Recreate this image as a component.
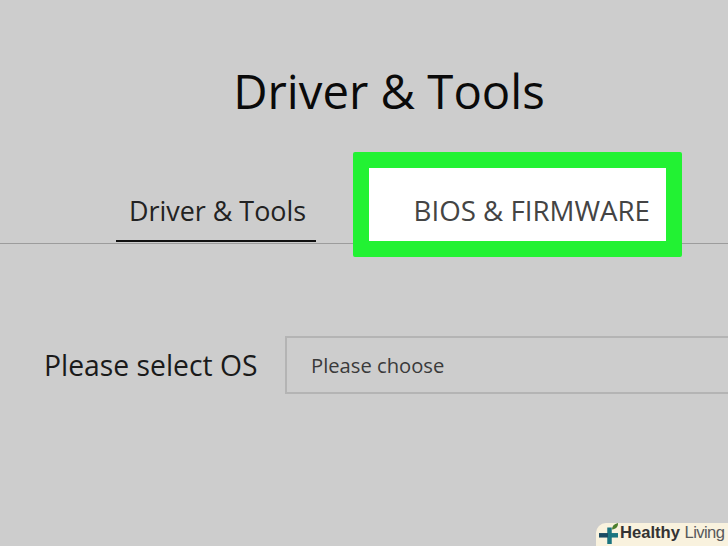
<script>
  const tabs = ['Driver & Tools', 'BIOS & FIRMWARE'];
</script>

<main class="page">
  <h1 class="title">Driver &amp; Tools</h1>

  <nav class="tabs">
    <div class="tab active">{tabs[0]}</div>
    <div class="tab highlighted"><span>{tabs[1]}</span></div>
  </nav>

  <div class="field">
    <div class="label">Please select OS</div>
    <div class="select">Please choose</div>
  </div>

  <div class="badge">
    <svg class="logo" viewBox="0 0 22 23" width="22" height="23" aria-hidden="true">
      <path d="M11.500 4.500V21" fill="none" stroke="#1b7480" stroke-width="4.500" />
      <path d="M11 12.300H20" fill="none" stroke="#1b7480" stroke-width="4.500" />
      <path d="M1 12.300H10" fill="none" stroke="#1b4a63" stroke-width="4.500" />
      <path d="M14 6.500c0-3.500 2-5.500 6-6.500.3 3.500-2 6-6 6.500z" fill="#4d7f2e" />
    </svg>
    <span class="brand"><b>Healthy</b> <span class="living">Living</span></span>
  </div>
</main>

<style>
  :global(body) {
    margin: 0;
    background: #cdcdcd;
  }

  .page {
    position: relative;
    width: 728px;
    height: 546px;
    overflow: hidden;
    background: #cdcdcd;
    font-family: "Open Sans", "Noto Sans", sans-serif;
    color: #1a1a1a;
  }

  .title {
    margin: 0;
    padding-top: 58px;
    padding-left: 50px;
    box-sizing: border-box;
    text-align: center;
    font-size: 47.3px;
    line-height: 66px;
    font-weight: 400;
    color: #0a0a0a;
    height: 152px;
  }

  .tabs {
    display: flex;
    align-items: flex-start;
    border-bottom: 1px solid #9c9c9c;
    box-sizing: border-box;
    height: 92px;
  }

  .tab {
    box-sizing: border-box;
    white-space: nowrap;
  }

  .active {
    width: 200px;
    height: 90px;
    margin-left: 116px;
    padding: 40px 0 0 13px;
    font-size: 26.9px;
    line-height: 38px;
    border-bottom: 2px solid #111;
    color: #222;
  }

  .highlighted {
    position: relative;
    width: 329px;
    height: 105px;
    margin-left: 37px;
    padding: 23px 16px 0 0;
    text-align: right;
    font-size: 27.7px;
    line-height: 38px;
    color: #444;
    background: #fff;
    border: 16px solid #22f233;
    border-radius: 2px;
  }

  .field {
    display: flex;
    align-items: center;
    margin-top: 92px;
    padding-left: 44px;
  }

  .label {
    width: 241px;
    font-size: 28.3px;
    color: #1a1a1a;
    white-space: nowrap;
  }

  .select {
    flex: 1;
    height: 58px;
    box-sizing: border-box;
    padding-left: 24px;
    line-height: 54px;
    font-size: 20.2px;
    color: #3a3a3a;
    border: 2px solid #b4b4b4;
    border-right: 0;
  }

  .badge {
    position: absolute;
    right: 0;
    bottom: 0;
    width: 132px;
    height: 23px;
    display: flex;
    align-items: center;
    background: #f9f2de;
    border-top-left-radius: 10px;
    padding-left: 2px;
    box-sizing: border-box;
  }

  .logo {
    flex: none;
  }

  .brand {
    font-family: "Liberation Sans", Arial, sans-serif;
    font-size: 16.6px;
    color: #58595b;
    white-space: nowrap;
    margin-bottom: 3px;
  }

  .brand b {
    color: #333;
  }

  .living {
    letter-spacing: -0.6px;
  }
</style>
